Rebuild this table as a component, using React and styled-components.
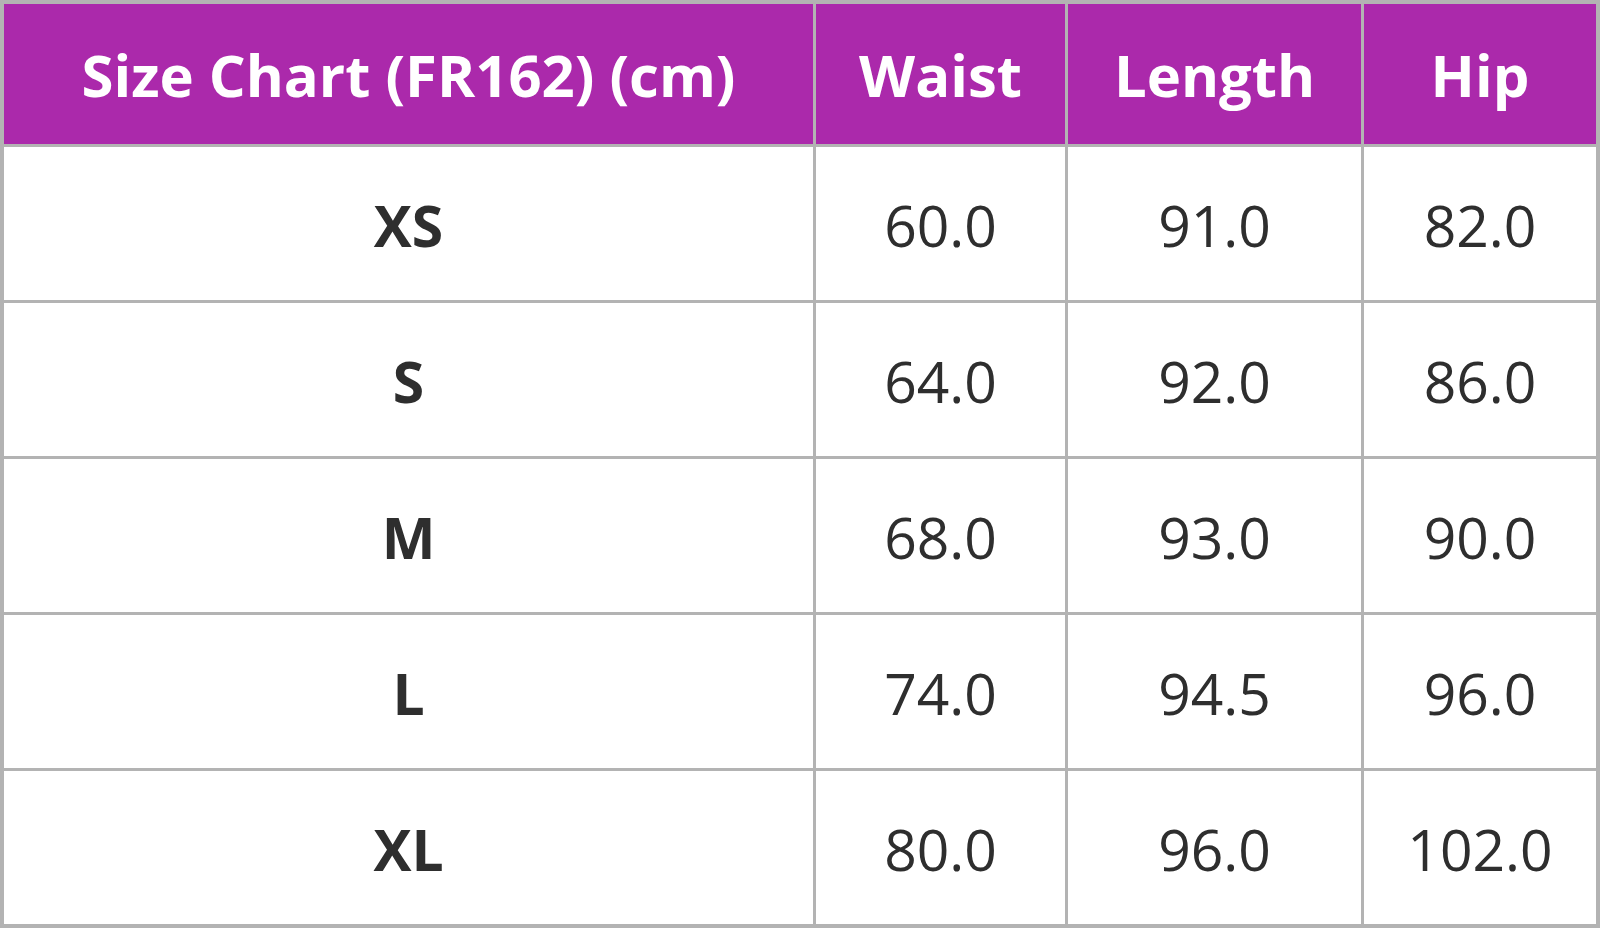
import styled, { createGlobalStyle } from 'styled-components'

const GlobalStyle = createGlobalStyle`
  html, body {
    margin: 0;
    padding: 0;
    background: #ffffff;
  }
`

const Chart = styled.div`
  display: grid;
  grid-template-columns: 809px 249px 293px 232px;
  grid-template-rows: 140px repeat(5, 153px);
  gap: 3px;
  padding: 4px;
  width: 1600px;
  height: 928px;
  box-sizing: border-box;
  background-color: #b3b3b3;
  font-family: 'Open Sans', 'Noto Sans', sans-serif;
`

const Head = styled.div`
  background-color: #ab29ab;
  color: #ffffff;
  font-size: 58px;
  font-weight: 700;
  display: flex;
  align-items: center;
  justify-content: center;
  white-space: nowrap;
`

const Cell = styled.div`
  background-color: #ffffff;
  color: #2e2e2e;
  font-size: 57px;
  font-weight: ${(p) => (p.$bold ? 700 : 400)};
  display: flex;
  align-items: center;
  justify-content: center;
  padding-top: 3px;
`

const columns = ['Size Chart (FR162) (cm)', 'Waist', 'Length', 'Hip']

const rows = [
  ['XS', '60.0', '91.0', '82.0'],
  ['S', '64.0', '92.0', '86.0'],
  ['M', '68.0', '93.0', '90.0'],
  ['L', '74.0', '94.5', '96.0'],
  ['XL', '80.0', '96.0', '102.0'],
]

const App = () => {
  return (
    <>
      <GlobalStyle />
      <Chart>
        {columns.map((c) => (
          <Head key={c}>{c}</Head>
        ))}
        {rows.map((r) =>
          r.map((v, i) => (
            <Cell key={r[0] + i} $bold={i === 0}>
              {v}
            </Cell>
          ))
        )}
      </Chart>
    </>
  )
}

export default App
